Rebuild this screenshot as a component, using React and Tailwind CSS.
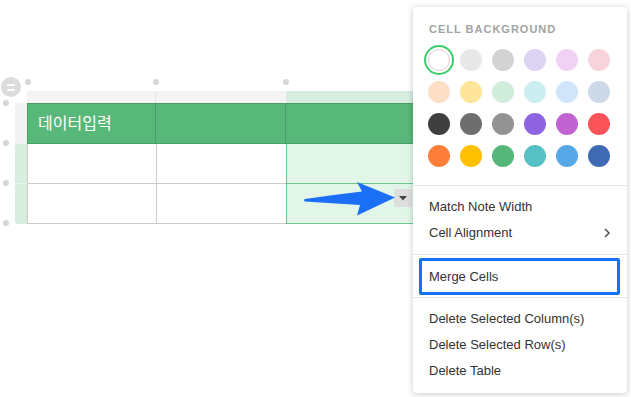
import React from "react";

const colors = [
  ["#ffffff", "#e8e8e8", "#d3d3d3", "#ddd3f3", "#f0d3f4", "#f9d3dc"],
  ["#fddec6", "#fee59a", "#d0ecdb", "#cdeef0", "#d0e5f9", "#cdd8e9"],
  ["#3f3f3f", "#6e6e6e", "#939393", "#8e64e0", "#bf64d0", "#fc5259"],
  ["#fd7e3a", "#ffc000", "#57b679", "#57c0c4", "#56a9e6", "#3f6ab3"],
];

function Dot({ className }) {
  return <div className={"absolute w-[6px] h-[6px] rounded-full bg-[#d6d6d6] " + className} />;
}

function Item({ children, chevron }) {
  return (
    <div className="h-[26px] flex items-center justify-between pl-[16px] pr-[17px] text-[13px] text-[#333]">
      <span>{children}</span>
      {chevron && (
        <svg width="6" height="10" viewBox="0 0 6 10">
          <path d="M1 1 L5 5 L1 9" fill="none" stroke="#444" strokeWidth="1.4" />
        </svg>
      )}
    </div>
  );
}

export default function App() {
  return (
    <div
      className="relative w-[631px] h-[397px] bg-white overflow-hidden"
      style={{ fontFamily: '"Liberation Sans", Arial, "Noto Sans CJK KR", sans-serif' }}
    >
      {/* table */}
      <div className="pt-[91px] pl-[15px] flex">
        <div className="flex flex-col w-[12px]">
          <div className="h-[12px] bg-white" />
          <div className="h-[41px] bg-[#f3f3f3]" />
          <div className="h-[40px] bg-[#d6ede0] border-b border-[#e6f4ec]" />
          <div className="h-[40px] bg-[#d6ede0] rounded-bl-[3px]" />
        </div>
        <div className="flex flex-col w-[400px]">
          <div className="h-[12px] flex">
            <div className="w-[129px] bg-[#f3f3f3] border-r border-[#e6e6e6]" />
            <div className="w-[130px] bg-[#f3f3f3]" />
            <div className="flex-1 bg-[#d6ede0]" />
          </div>
          <div className="h-[41px] flex bg-[#58b879] border border-[#4a9d65]">
            <div className="w-[128px] border-r border-[#4a9d65] flex items-center pl-[10px] text-white text-[16px]">
              데이터입력
            </div>
            <div className="w-[130px] border-r border-[#4a9d65]" />
            <div className="flex-1" />
          </div>
          {[0, 1].map((r) => (
            <div key={r} className="h-[40px] flex">
              <div className="w-[130px] border-l border-b border-r border-[#cccccc]" />
              <div className="w-[129px] border-b border-[#cccccc]" />
              <div className="flex-1 bg-[#e1f5e8] border-l border-b border-[#6cc68d]" />
            </div>
          ))}
        </div>
      </div>

      {/* handles */}
      <div className="absolute left-[1px] top-[77px] w-[20px] h-[20px] rounded-full bg-[#dcdcdc] flex flex-col items-center justify-center gap-[3px]">
        <div className="w-[8px] h-[2px] bg-white rounded" />
        <div className="w-[8px] h-[2px] bg-white rounded" />
      </div>
      <Dot className="left-[25px] top-[79px]" />
      <Dot className="left-[153px] top-[79px]" />
      <Dot className="left-[283px] top-[79px]" />
      <Dot className="left-[3px] top-[100px]" />
      <Dot className="left-[3px] top-[140px]" />
      <Dot className="left-[3px] top-[180px]" />
      <Dot className="left-[3px] top-[220px]" />

      {/* dropdown button */}
      <div className="absolute left-[394px] top-[189px] w-[18px] h-[18px] rounded-[3px] bg-[#dedede] flex items-center justify-center">
        <svg width="8" height="5" viewBox="0 0 8 5">
          <path d="M0 0 L8 0 L4 4.5 Z" fill="#444" />
        </svg>
      </div>

      {/* blue arrow */}
      <svg className="absolute left-0 top-0" width="631" height="397" viewBox="0 0 631 397" style={{ pointerEvents: "none" }}>
        <path
          d="M305 199 Q332 195 362 191.5 L357 182 L395 197.5 L357 215.5 L360 205 Q332 203 305 201.5 Q303 200 305 199 Z"
          fill="#1b6ef6"
        />
      </svg>

      {/* menu */}
      <div className="absolute left-[413px] top-[7px] w-[214px] h-[386px] bg-white rounded-[3px] shadow-[0_1px_6px_rgba(0,0,0,0.22)] flex flex-col">
        <div className="mt-[15px] h-[14px] leading-[14px] pl-[16px] text-[11px] font-bold tracking-[1px] text-[#a3a3a3]">
          CELL BACKGROUND
        </div>
        <div className="mt-[13px] pl-[15px] grid grid-cols-[repeat(6,22px)] gap-[10px]">
          {colors.flat().map((c, i) =>
            i === 0 ? (
              <div key={i} className="w-[22px] h-[22px] rounded-full bg-white ring-[2px] ring-[#3dcc6c] ring-offset-[2px] ring-offset-white relative">
                <div className="absolute inset-0 rounded-full border border-[#d5d5d5]" />
              </div>
            ) : (
              <div key={i} className="w-[22px] h-[22px] rounded-full" style={{ backgroundColor: c }} />
            )
          )}
        </div>
        <div className="mt-[18px] h-px bg-[#e6e6e6]" />
        <div className="pt-[8px] pb-[8px]">
          <Item>Match Note Width</Item>
          <Item chevron>Cell Alignment</Item>
        </div>
        <div className="h-px bg-[#e6e6e6]" />
        <div className="mt-[3px] ml-[6px] mr-[7px] h-[37px] border-[3px] border-[#1a6ff6] rounded-[2px] flex items-center pl-[7px] text-[13px] text-[#333]">
          Merge Cells
        </div>
        <div className="mt-[2px] h-px bg-[#e6e6e6]" />
        <div className="pt-[8px]">
          <Item>Delete Selected Column(s)</Item>
          <Item>Delete Selected Row(s)</Item>
          <Item>Delete Table</Item>
        </div>
      </div>
    </div>
  );
}
